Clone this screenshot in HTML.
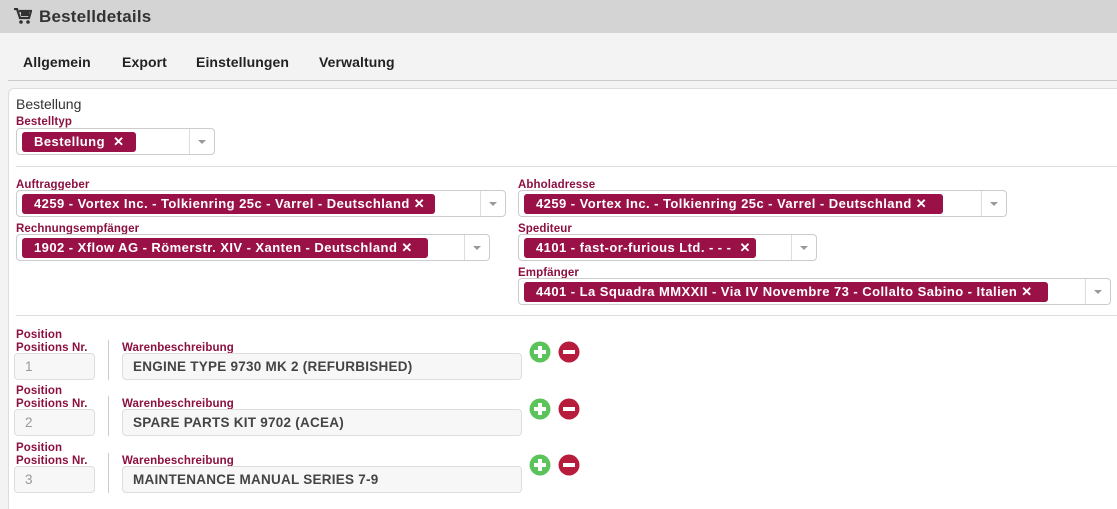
<!DOCTYPE html>
<html><head><meta charset="utf-8"><style>
*{box-sizing:border-box;margin:0;padding:0}
html,body{width:1117px;height:509px;overflow:hidden}
body{background:#f3f3f3;font-family:"Liberation Sans",sans-serif;position:relative}
.a{position:absolute;white-space:nowrap}
.hdr{left:0;top:0;width:1117px;height:33px;background:#d4d4d4}
.title{left:39px;top:7px;font-size:17px;font-weight:bold;color:#333;letter-spacing:0.2px}
.tab{top:54px;font-size:14px;color:#222;font-weight:bold;letter-spacing:0.1px}
.panel{left:8px;top:88px;width:1130px;height:430px;background:#fff;border:1px solid #ddd;border-radius:6px}
.lbl{font-size:11.5px;color:#8c1040;font-weight:bold;letter-spacing:0.1px;margin-top:2px}
.sel{height:27px;border:1px solid #ccc;border-radius:4px;background:#fff}
.sel .dv{position:absolute;top:0;bottom:0;border-left:1px solid #ddd}
.sel .ar{position:absolute;top:11px;width:0;height:0;border-left:4px solid transparent;border-right:4px solid transparent;border-top:4px solid #999}
.tag{position:absolute;top:3px;height:20px;background:#991146;border-radius:3px;color:#fff;font-size:13px;font-weight:bold;line-height:20px;padding-left:12px;letter-spacing:0.45px;overflow:hidden}
.hl{height:1px;background:#ddd}
.inp{height:27px;border:1px solid #ddd;border-radius:4px;background:#f7f7f7;font-size:13.5px;line-height:25px;padding-left:10px;color:#444;font-weight:bold;letter-spacing:0.25px}
</style></head><body>
<div class="a hdr"></div>
<svg class="a" style="left:14px;top:8px" width="18" height="16" viewBox="0 0 18 16"><path d="M0 1h3l3 9h9l2-7H5" fill="none" stroke="#333" stroke-width="2.2"/><rect x="7" y="4" width="8" height="4" fill="#333"/><circle cx="7" cy="14" r="1.8" fill="#333"/><circle cx="14" cy="14" r="1.8" fill="#333"/></svg>
<div class="a title">Bestelldetails</div>
<div class="a tab" style="left:23px">Allgemein</div>
<div class="a tab" style="left:122px">Export</div>
<div class="a tab" style="left:196px">Einstellungen</div>
<div class="a tab" style="left:319px">Verwaltung</div>
<div class="a hl" style="left:8px;top:80px;width:1109px;background:#ccc"></div>
<div class="a panel"></div>
<div class="a" style="left:16px;top:96px;font-size:14px;color:#333">Bestellung</div>
<div class="a lbl" style="left:16px;top:114px">Bestelltyp</div>
<div class="a sel" style="left:16px;top:128px;width:199px"><div class="dv" style="left:172px"></div><div class="ar" style="left:181px"></div><div class="tag" style="left:5px;width:114px">Bestellung&nbsp; ✕</div></div>
<div class="a hl" style="left:16px;top:166px;width:1101px"></div>

<div class="a lbl" style="left:16px;top:177px">Auftraggeber</div>
<div class="a sel" style="left:16px;top:190px;width:490px"><div class="dv" style="left:463px"></div><div class="ar" style="left:472px"></div><div class="tag" style="left:5px;width:413px">4259 - Vortex Inc. - Tolkienring 25c - Varrel - Deutschland&nbsp;✕</div></div>
<div class="a lbl" style="left:16px;top:221px">Rechnungsempfänger</div>
<div class="a sel" style="left:16px;top:234px;width:474px"><div class="dv" style="left:447px"></div><div class="ar" style="left:456px"></div><div class="tag" style="left:5px;width:406px">1902 - Xflow AG - Römerstr. XIV - Xanten - Deutschland&nbsp;✕</div></div>

<div class="a lbl" style="left:518px;top:177px">Abholadresse</div>
<div class="a sel" style="left:518px;top:190px;width:489px"><div class="dv" style="left:462px"></div><div class="ar" style="left:471px"></div><div class="tag" style="left:5px;width:419px">4259 - Vortex Inc. - Tolkienring 25c - Varrel - Deutschland&nbsp;✕</div></div>
<div class="a lbl" style="left:518px;top:221px">Spediteur</div>
<div class="a sel" style="left:518px;top:234px;width:299px"><div class="dv" style="left:272px"></div><div class="ar" style="left:281px"></div><div class="tag" style="left:5px;width:232px">4101 - fast-or-furious Ltd. - - -&nbsp; ✕</div></div>
<div class="a lbl" style="left:518px;top:265px">Empfänger</div>
<div class="a sel" style="left:518px;top:278px;width:593px"><div class="dv" style="left:566px"></div><div class="ar" style="left:575px"></div><div class="tag" style="left:5px;width:524px">4401 - La Squadra MMXXII - Via IV Novembre 73 - Collalto Sabino - Italien&nbsp;✕</div></div>
<div class="a hl" style="left:16px;top:315px;width:1101px"></div>

<div class="a lbl" style="left:16px;top:327px">Position</div>
<div class="a lbl" style="left:16px;top:340px">Positions Nr.</div>
<div class="a inp" style="left:14px;top:353px;width:81px;color:#999;font-weight:normal">1</div>
<div class="a" style="left:108px;top:340px;width:1px;height:40px;background:#ccc"></div>
<div class="a lbl" style="left:122px;top:340px">Warenbeschreibung</div>
<div class="a inp" style="left:122px;top:353px;width:400px">ENGINE TYPE 9730 MK 2 (REFURBISHED)</div>

<div class="a lbl" style="left:16px;top:383px">Position</div>
<div class="a lbl" style="left:16px;top:396px">Positions Nr.</div>
<div class="a inp" style="left:14px;top:409px;width:81px;color:#999;font-weight:normal">2</div>
<div class="a" style="left:108px;top:396px;width:1px;height:40px;background:#ccc"></div>
<div class="a lbl" style="left:122px;top:396px">Warenbeschreibung</div>
<div class="a inp" style="left:122px;top:409px;width:400px">SPARE PARTS KIT 9702 (ACEA)</div>

<div class="a lbl" style="left:16px;top:440px">Position</div>
<div class="a lbl" style="left:16px;top:453px">Positions Nr.</div>
<div class="a inp" style="left:14px;top:466px;width:81px;color:#999;font-weight:normal">3</div>
<div class="a" style="left:108px;top:453px;width:1px;height:40px;background:#ccc"></div>
<div class="a lbl" style="left:122px;top:453px">Warenbeschreibung</div>
<div class="a inp" style="left:122px;top:466px;width:400px">MAINTENANCE MANUAL SERIES 7-9</div>

<svg class="a" style="left:529px;top:341px" width="52" height="140" viewBox="0 0 52 140">
<g id="r"><circle cx="11" cy="11" r="10.5" fill="#5cc35a"/><rect x="5" y="9" width="12" height="4" fill="#fff"/><rect x="9" y="5" width="4" height="12" fill="#fff"/><circle cx="40" cy="11" r="10.5" fill="#b81c3c"/><rect x="34" y="9" width="12" height="4" fill="#fff"/></g>
<use href="#r" y="57"/><use href="#r" y="113"/>
</svg>
</body></html>
